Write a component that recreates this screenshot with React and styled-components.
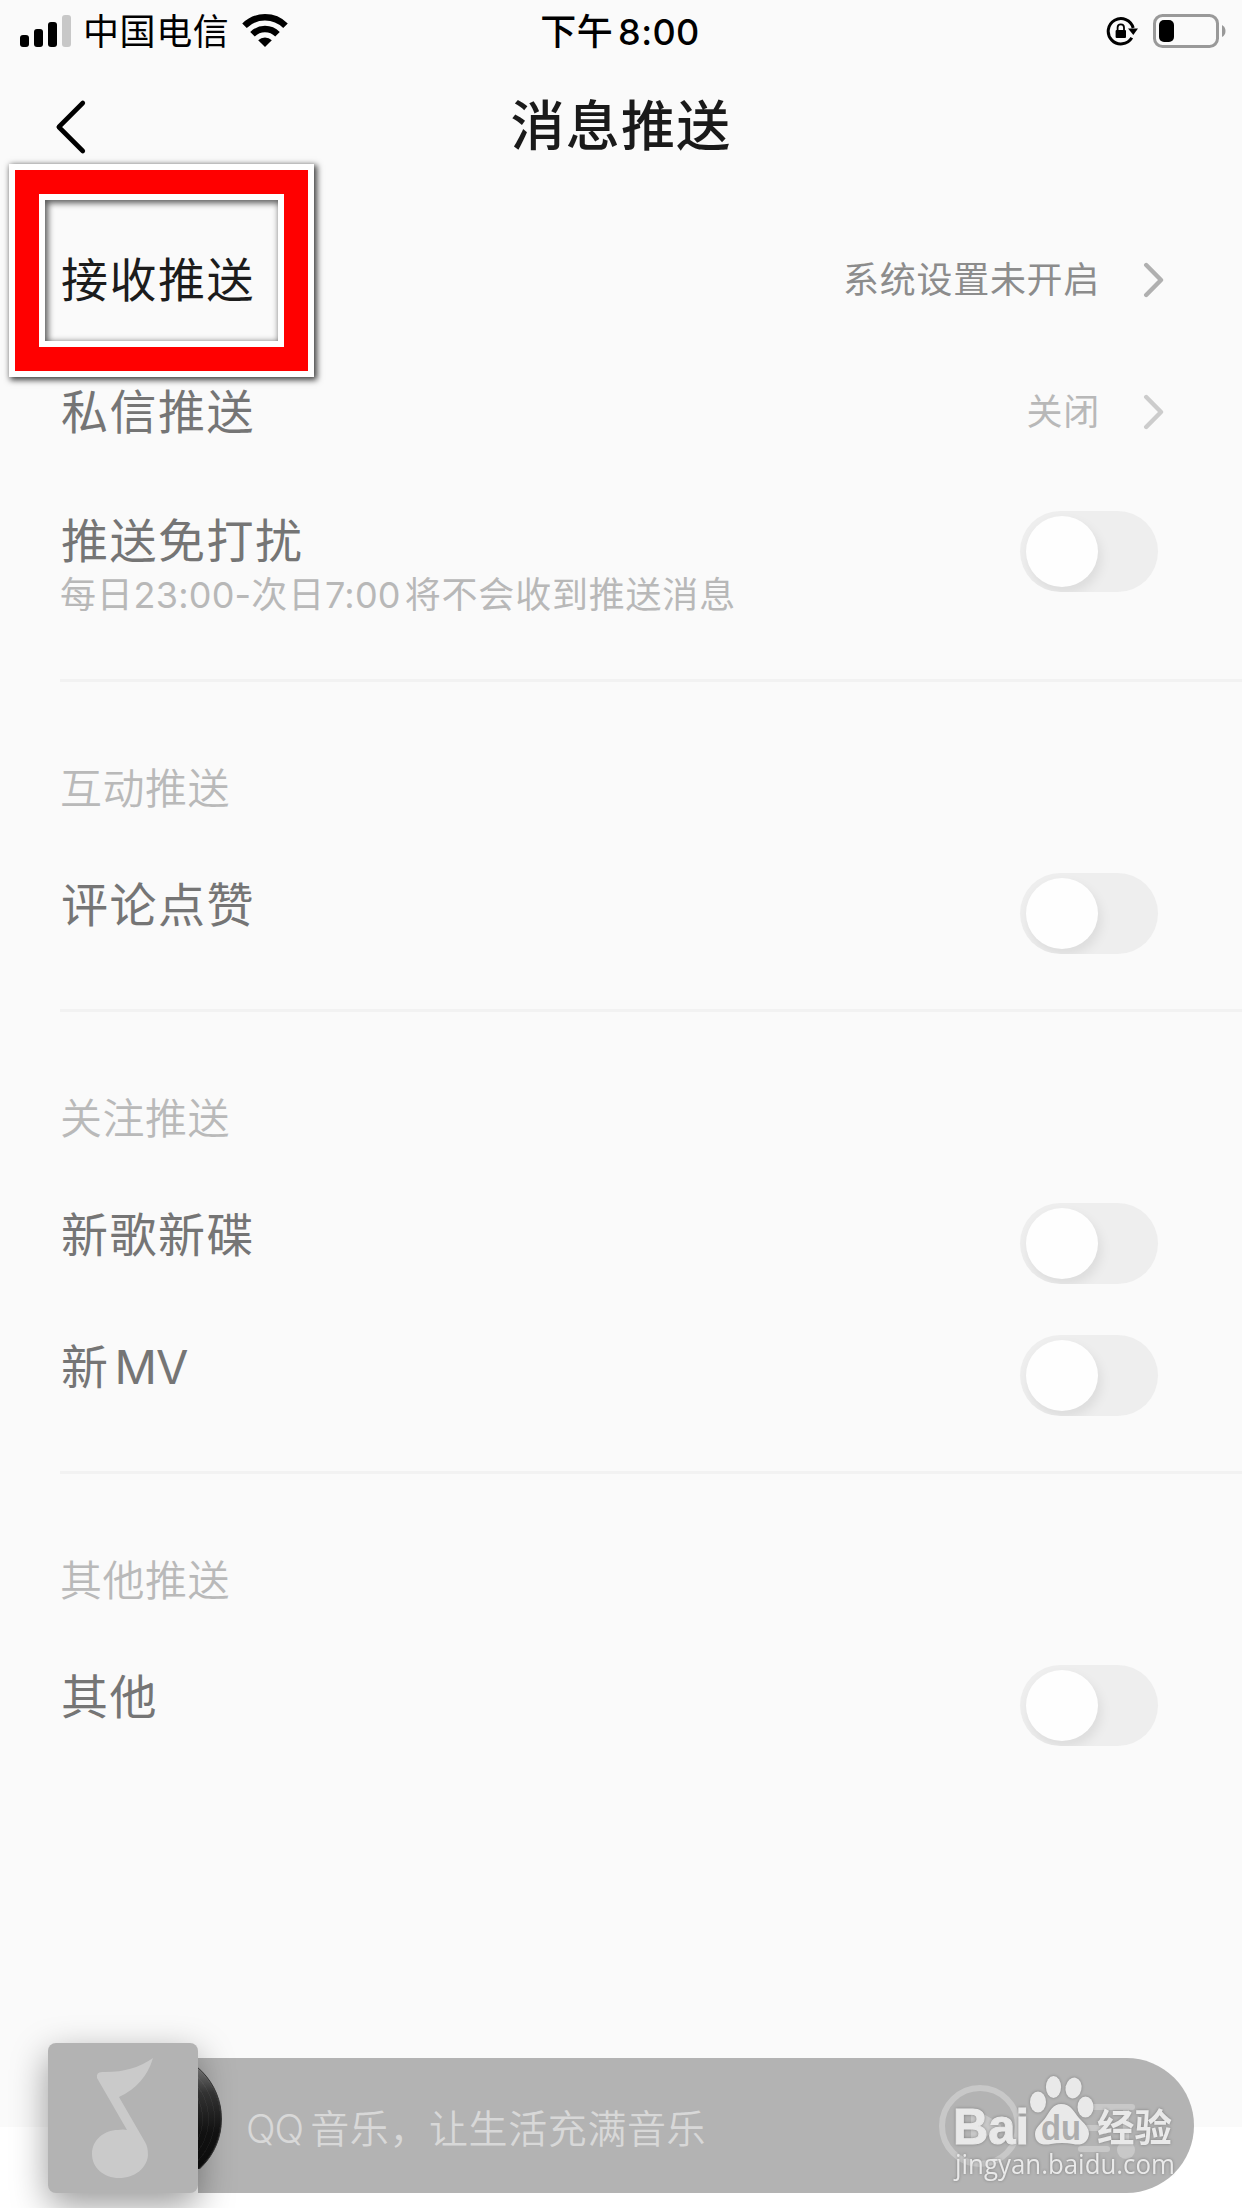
import React from 'react';
import styled, { createGlobalStyle } from 'styled-components';

const GlobalStyle = createGlobalStyle`
  * {
    box-sizing: border-box;
  }
  body {
    margin: 0;
    font-family: Inter, 'Noto Sans CJK SC', sans-serif;
  }
`;

const Page = styled.div`
  position: relative;
  display: flex;
  flex-direction: column;
  width: 1242px;
  height: 2208px;
  overflow: hidden;
  background: linear-gradient(#fafafa 2127px, #fff 2127px);
`;

const StatusBar = styled.header`
  display: grid;
  grid-template-columns: 1fr auto 1fr;
  align-items: center;
  height: 60px;
  padding: 0 15px 0 20px;
  color: #000;
  font-size: 36px;
  line-height: 60px;
`;

const StatusGroup = styled.div`
  display: flex;
  align-items: center;
  justify-content: ${({ $end }) => ($end ? 'flex-end' : 'flex-start')};
`;

const Carrier = styled.span`
  margin: 2px 13px 0 11px;
  letter-spacing: 0.6px;
`;

const Time = styled.span`
  margin: 2px 7px 0 0;
  font-weight: 500;
  letter-spacing: 0.4px;
  span {
    margin-left: 5px;
  }
`;

const NavBar = styled.nav`
  display: grid;
  grid-template-columns: 120px 1fr 120px;
  align-items: center;
  height: 153px;
  padding-bottom: 19px;
  svg {
    margin-left: 54px;
  }
`;

const Title = styled.h1`
  margin: 0;
  color: #1a1a1a;
  font-size: 54px;
  font-weight: 500;
  line-height: 76px;
  letter-spacing: 1.2px;
  text-align: center;
`;

const Section = styled.section`
  padding: 0 0 39px 60px;
`;

const Divider = styled.hr`
  width: 1182px;
  height: 3px;
  margin: 0 0 0 60px;
  border: 0;
  background: #f2f2f2;
`;

const SectionTitle = styled.h2`
  height: 156px;
  margin: 0;
  padding-top: 77px;
  color: #b9b9b9;
  font-size: 42px;
  font-weight: 350;
  line-height: 60px;
  letter-spacing: 0.5px;
`;

const Row = styled.div`
  position: relative;
  display: flex;
  align-items: center;
  justify-content: space-between;
  height: 132px;
  padding-right: 78px;
`;

const Label = styled.div`
  padding: 1px 0 0 1px;
  color: ${({ $active }) => ($active ? '#1c1c1c' : '#757575')};
  font-size: 47px;
  line-height: 60px;
  letter-spacing: 1.5px;
  span {
    margin-left: 5px;
    letter-spacing: -1px;
  }
`;

const Value = styled.div`
  display: flex;
  align-items: center;
  gap: 43px;
  padding-top: 1px;
  color: ${({ $active }) => ($active ? '#8c8c8c' : '#b8b8b8')};
  font-size: 36px;
  line-height: 50px;
  letter-spacing: 0.7px;
  svg {
    color: ${({ $active }) => ($active ? '#b0b0b0' : '#cccccc')};
  }
`;

const QuietRow = styled(Row)`
  align-items: flex-start;
  height: 163px;
  padding: 33px 84px 0 0;
`;

const Hint = styled.div`
  color: #b8b8b8;
  font-size: 36px;
  line-height: 48px;
  letter-spacing: 0.8px;
  span {
    letter-spacing: 0.2px;
  }
  span:last-child {
    margin-right: 4px;
  }
`;

const SwitchRow = styled(Row)`
  padding-right: 84px;
`;

const Track = styled.div`
  width: 138px;
  height: 81px;
  margin-top: ${({ $offset }) => $offset}px;
  padding: 5px 6px;
  border-radius: 41px;
  background: #eeeeee;
  overflow: hidden;
`;

const Knob = styled.div`
  width: 72px;
  height: 71px;
  border-radius: 50%;
  background: #fefefe;
  box-shadow: 3px 6px 12px rgba(0, 0, 0, 0.08);
`;

// Annotation frame around the first row label
const Highlight = styled.div`
  position: absolute;
  left: -51.5px;
  top: -49.5px;
  width: 305px;
  height: 213px;
  border: 6px solid #fff;
  box-shadow: 2px 2px 6px 1px rgba(0, 0, 0, 0.75);
  div {
    height: 100%;
    border: 24px solid #f00;
  }
  div > div {
    border: 6px solid #fff;
    box-shadow: inset 2px 2px 6px 1px rgba(0, 0, 0, 0.65);
  }
`;

const Player = styled.footer`
  display: flex;
  align-items: flex-end;
  height: 150px;
  margin: auto 48px 15px;
`;

const Cover = styled.div`
  position: relative;
  z-index: 2;
  width: 150px;
  height: 150px;
  border-radius: 8px;
  background: #b3b3b3;
  box-shadow: 0 12px 36px rgba(0, 0, 0, 0.4);
`;

const Vinyl = styled.div`
  position: absolute;
  z-index: 3;
  left: 150px;
  top: 24px;
  width: 24px;
  height: 102px;
  overflow: hidden;
  &::before {
    content: '';
    position: absolute;
    right: 0;
    top: -16px;
    width: 134px;
    height: 134px;
    border-radius: 50%;
    border: 1px solid #333;
    background: repeating-radial-gradient(
        circle,
        rgba(255, 255, 255, 0.04) 0 1px,
        transparent 1px 6px
      ),
      linear-gradient(#777 10%, #333 30%, #111 60%, #080808);
  }
`;

const Bar = styled.div`
  display: flex;
  flex: 1;
  align-items: center;
  height: 135px;
  padding: 6px 0 0 48px;
  border-radius: 0 68px 68px 0;
  background: #b3b3b3;
  color: #d8d8d8;
  font-size: 39px;
  line-height: 60px;
  letter-spacing: 0.6px;
`;

const Song = styled.div`
  flex: 1;
  font-weight: 350;
  span {
    margin-right: 7px;
    letter-spacing: -1px;
  }
`;

const Controls = styled.svg`
  margin: -8px 50px 0 0;
`;

const Watermark = styled.svg`
  position: absolute;
  left: 945px;
  top: 2065px;
`;

const Signal = () => (
  <svg width="52" height="34" viewBox="0 0 52 34">
    <rect x="0" y="21" width="9" height="12" rx="3" />
    <rect x="14" y="15" width="9" height="18" rx="3" />
    <rect x="28" y="8" width="9" height="25" rx="3" />
    <rect x="42" y="1" width="9" height="32" rx="3" fill="#c8c8c8" />
  </svg>
);

const Wifi = () => (
  <svg width="46" height="34" viewBox="0 0 46 34">
    <g fill="none" stroke="#000" strokeWidth="6.4">
      <path d="M2.5 11.8 A29 29 0 0 1 43.5 11.8" />
      <path d="M10.5 20.2 A17.6 17.6 0 0 1 35.5 20.2" />
    </g>
    <path d="M23 33 L16.2 26.3 A9.6 9.6 0 0 1 29.8 26.3 Z" />
  </svg>
);

const RotationLock = () => (
  <svg width="32" height="32" viewBox="0 0 32 32">
    <path
      d="M25.8 22.8 A12.7 12.7 0 1 1 27.2 13"
      fill="none"
      stroke="#000"
      strokeWidth="3"
    />
    <path d="M22 13.5 H32 L27.3 20 Z" />
    <rect x="9.6" y="15" width="10.4" height="8" rx="1" />
    <path
      d="M11.6 15.5 V12.5 A3.2 3.2 0 0 1 18 12.5 V15.5"
      fill="none"
      stroke="#000"
      strokeWidth="1.8"
    />
  </svg>
);

const BatteryIcon = styled.svg`
  margin-left: 15px;
`;

const Battery = () => (
  <BatteryIcon width="74" height="34" viewBox="0 0 74 34">
    <rect
      x="1.5"
      y="1.5"
      width="63"
      height="31"
      rx="8"
      fill="none"
      stroke="#999"
      strokeWidth="3"
    />
    <rect x="6" y="6" width="15" height="22" rx="5" />
    <path d="M69 11 Q72.5 13 72.5 17 Q72.5 21 69 23 Z" fill="#999" />
  </BatteryIcon>
);

const Back = () => (
  <svg width="34" height="56" viewBox="0 0 34 56">
    <path
      d="M28.8 4 L4.8 28 L28.8 52"
      fill="none"
      stroke="#000"
      strokeWidth="4.6"
      strokeLinecap="round"
      strokeLinejoin="round"
    />
  </svg>
);

const Chevron = () => (
  <svg width="21" height="38" viewBox="0 0 21 38">
    <path
      d="M3.2 4 L18 19 L3.2 34"
      fill="none"
      stroke="currentColor"
      strokeWidth="4.4"
      strokeLinecap="round"
      strokeLinejoin="round"
    />
  </svg>
);

const Note = () => (
  <svg width="150" height="150" viewBox="0 0 150 150">
    <path
      d="M105 15 Q97 42 71 54 L97 99 Q100 104 100 112 C99 125 87 135 71 135 C56 135 44 125 44 111 C44 97 56 87 70 87 Q75 86 79 87 L49 35 Q48 29 54 29 Q84 30 105 15 Z"
      fill="#cacaca"
    />
  </svg>
);

const Switch = ({ offset = 19 }) => (
  <Track $offset={offset}>
    <Knob />
  </Track>
);

const PlayerControls = () => (
  <Controls width="205" height="90" viewBox="0 0 205 90">
    <g fill="none" stroke="#c8c8c8" strokeWidth="6" strokeLinecap="round">
      <circle cx="41" cy="46" r="38" />
      <path d="M142 27 H193" />
      <path d="M142 48 H166" />
      <path d="M142 69 H168" />
      <path d="M187 29 V70" />
    </g>
    <circle cx="187" cy="70" r="9" fill="#c8c8c8" />
    <path d="M32 31 Q32 27 36 29 L60 43 Q64 46 60 49 L36 63 Q32 65 32 61 Z" fill="#c8c8c8" />
  </Controls>
);

const MarkShape = styled.g`
  fill: #e9e9e9;
  filter: drop-shadow(0 0 1.5px rgba(0, 0, 0, 0.3));
`;

const BaiduMark = () => (
  <Watermark width="240" height="130" viewBox="0 0 240 130">
    <MarkShape>
      <text
        x="8"
        y="79"
        fontFamily="Liberation Sans, sans-serif"
        fontSize="50"
        fontWeight="700"
        stroke="#e9e9e9"
        textLength="76"
        lengthAdjust="spacingAndGlyphs"
      >
        Bai
      </text>
      <ellipse cx="93" cy="37" rx="8" ry="10.5" />
      <ellipse cx="108.5" cy="22" rx="7.6" ry="11" />
      <ellipse cx="128.5" cy="23" rx="8" ry="10.5" transform="rotate(12 128.5 23)" />
      <ellipse cx="140.5" cy="42" rx="8" ry="10.5" />
      <path d="M116 39 C126 39 129 47 134 53 C140 59 144 63 144 69 C143 78 136 81 128 79 Q117 77 106 79 C97 81 90 78 90 69 C90 62 97 58 101 52 C105 46 108 39 116 39 Z" />
      <text
        x="152"
        y="76"
        fontFamily="Noto Sans CJK SC, sans-serif"
        fontSize="38"
        fontWeight="700"
        textLength="75"
        lengthAdjust="spacingAndGlyphs"
      >
        经验
      </text>
      <text
        x="10"
        y="109"
        fontFamily="Open Sans, sans-serif"
        fontSize="27"
        textLength="220"
        lengthAdjust="spacingAndGlyphs"
      >
        jingyan.baidu.com
      </text>
    </MarkShape>
    <text
      x="96"
      y="75"
      fill="#adadad"
      fontFamily="Liberation Sans, sans-serif"
      fontSize="35"
      fontWeight="700"
      textLength="40"
      lengthAdjust="spacingAndGlyphs"
    >
      du
    </text>
  </Watermark>
);

const groups = [
  { title: '互动推送', items: [{ name: '评论点赞' }] },
  {
    title: '关注推送',
    items: [{ name: '新歌新碟' }, { name: '新', latin: 'MV' }]
  },
  { title: '其他推送', items: [{ name: '其他' }] }
];

const App = () => {
  return (
    <>
      <GlobalStyle />
      <Page>
        <StatusBar>
          <StatusGroup>
            <Signal />
            <Carrier>中国电信</Carrier>
            <Wifi />
          </StatusGroup>
          <Time>
            下午<span>8:00</span>
          </Time>
          <StatusGroup $end>
            <RotationLock />
            <Battery />
          </StatusGroup>
        </StatusBar>

        <NavBar>
          <Back />
          <Title>消息推送</Title>
        </NavBar>

        <Section>
          <Row>
            <Highlight>
              <div>
                <div />
              </div>
            </Highlight>
            <Label $active>接收推送</Label>
            <Value $active>
              系统设置未开启
              <Chevron />
            </Value>
          </Row>
          <Row>
            <Label>私信推送</Label>
            <Value>
              关闭
              <Chevron />
            </Value>
          </Row>
          <QuietRow>
            <div>
              <Label>推送免打扰</Label>
              <Hint>
                每日<span>23:00-</span>次日<span>7:00</span>将不会收到推送消息
              </Hint>
            </div>
            <Switch offset={1} />
          </QuietRow>
        </Section>

        {groups.map(({ title, items }) => (
          <React.Fragment key={title}>
            <Divider />
            <Section>
              <SectionTitle>{title}</SectionTitle>
              {items.map(({ name, latin }) => (
                <SwitchRow key={name}>
                  <Label>
                    {name}
                    {latin && <span>{latin}</span>}
                  </Label>
                  <Switch />
                </SwitchRow>
              ))}
            </Section>
          </React.Fragment>
        ))}

        <Player>
          <Cover>
            <Note />
            <Vinyl />
          </Cover>
          <Bar>
            <Song>
              <span>QQ</span>音乐，让生活充满音乐
            </Song>
            <PlayerControls />
          </Bar>
        </Player>
        <BaiduMark />
      </Page>
    </>
  );
};

export default App;
